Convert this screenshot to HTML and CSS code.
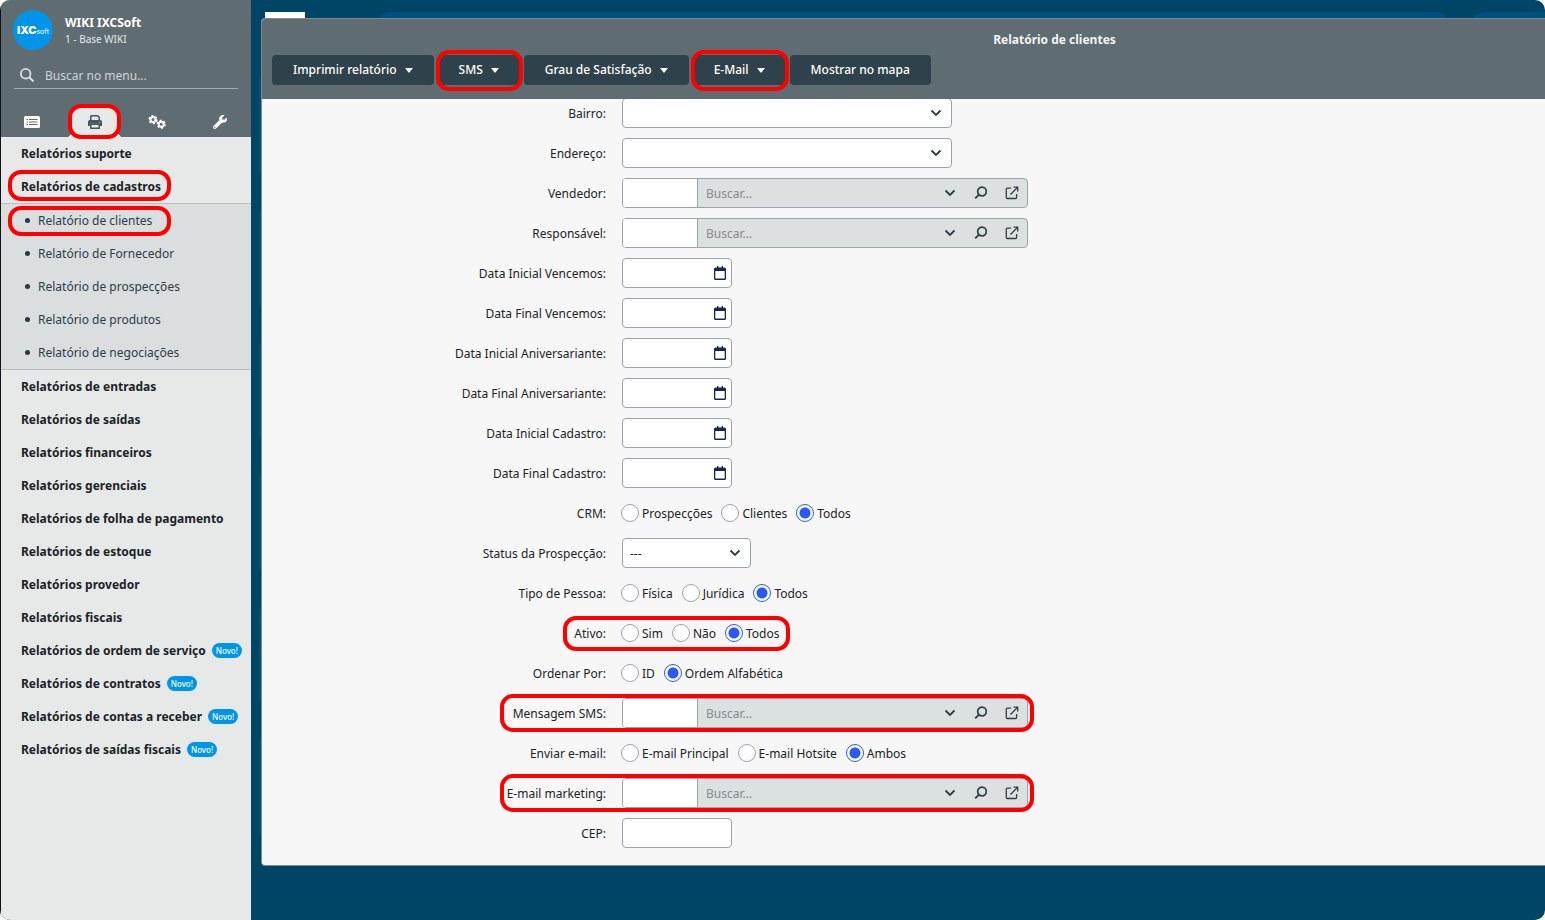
FILE: index.html
```
<!DOCTYPE html>
<html lang="pt-BR">
<head>
<meta charset="utf-8">
<title>Relatório de clientes</title>
<link rel="stylesheet" href="styles.css">
</head>
<body>
<svg class="sprite" aria-hidden="true">
  <symbol id="i-chevron" viewBox="0 0 12 12"><path d="M1.500 3.500 6 8l4.500-4.500" fill="none" stroke="currentColor" stroke-width="1.800"/></symbol>
  <symbol id="i-lens" viewBox="0 0 14 14"><circle cx="8" cy="5.500" r="4.300" fill="none" stroke="currentColor" stroke-width="1.700"/><path d="M4.900 8.700 1.300 12.300" fill="none" stroke="currentColor" stroke-width="1.900"/></symbol>
  <symbol id="i-open" viewBox="0 0 14 14"><path d="M6 2.200H2.300a1 1 0 0 0-1 1v8.300a1 1 0 0 0 1 1h8.300a1 1 0 0 0 1-1V8M5.500 8.500 12.200 1.600M8.500 1.200h4.200v4.200" fill="none" stroke="currentColor" stroke-width="1.300"/></symbol>
  <symbol id="i-cal" viewBox="0 0 12 14"><path d="M3 0h1.400v1.500h3.200V0H9v1.500h1.500A1.500 1.500 0 0 1 12 3v9.500a1.500 1.500 0 0 1-1.500 1.500h-9A1.500 1.500 0 0 1 0 12.500V3a1.500 1.500 0 0 1 1.500-1.500H3zM1.300 5v7.500h9.400V5z" fill="currentColor" fill-rule="evenodd"/></symbol>
</svg>
<div class="app">
  <aside class="sidebar">
    <header class="side-head">
      <div class="brand">
        <div class="logo"><b>IXC</b><span>soft</span></div>
        <div class="who"><strong>WIKI IXCSoft</strong><span>1 - Base WIKI</span></div>
      </div>
      <label class="find">
        <svg viewBox="0 0 14 14" width="14" height="14"><circle cx="5.700" cy="5.700" r="4.800" fill="none" stroke="currentColor" stroke-width="1.800"/><path d="m9.300 9.300 4.200 4.200" stroke="currentColor" stroke-width="2"/></svg>
        <input type="search" placeholder="Buscar no menu..." aria-label="Buscar no menu">
      </label>
      <nav class="tabs">
        <button type="button" aria-label="Cadastros"><svg viewBox="0 0 16 12" width="16" height="12"><rect width="16" height="12" rx="1.500" fill="currentColor"/><path d="M2.500 3.500h1.500M5 3.500h8.500M2.500 6h1.500M5 6h8.500M2.500 8.500h1.500M5 8.500h8.500" stroke="#5f6c72" stroke-width="1.200"/></svg></button>
        <button type="button" class="active" aria-label="Relatórios"><span class="tab mark mark-tab"><svg viewBox="0 0 14 14" width="14" height="14"><path d="M2.800 5.500V1.600q0-.8.800-.8h6l1.600 1.600v3.100" fill="none" stroke="currentColor" stroke-width="1.500"/><path d="M1.800 5h10.400Q14 5 14 6.800V11h-2V8.800H2V11H0V6.800Q0 5 1.800 5z" fill="currentColor"/><path d="M2.800 9.200h8.400v4H2.800z" fill="none" stroke="currentColor" stroke-width="1.500"/><circle cx="11.800" cy="7" r=".6" fill="#e7e9e8"/></svg></span></button>
        <button type="button" aria-label="Configurações"><svg viewBox="0 0 18 14" width="18" height="14"><g fill="none" stroke="currentColor"><circle cx="5" cy="4.600" r="2.500" stroke-width="2"/><circle cx="5" cy="4.600" r="3.800" stroke-width="1.600" stroke-dasharray="2 1.980"/><circle cx="13.200" cy="9.200" r="2.500" stroke-width="2"/><circle cx="13.200" cy="9.200" r="3.800" stroke-width="1.600" stroke-dasharray="2 1.980"/></g></svg></button>
        <button type="button" aria-label="Ferramentas"><svg viewBox="0 0 512 512" width="14" height="14"><path fill="currentColor" d="M507.700 109.100c-2.200-9-13.500-12.100-20.100-5.500l-74.400 74.400-67.900-11.300L334 98.900l74.400-74.400c6.600-6.600 3.400-17.900-5.700-20.200-47.400-11.700-99.600.9-136.600 37.900-39.600 39.600-50.600 97.100-34.100 147.200L18.700 402.800c-25 25-25 65.500 0 90.500s65.500 25 90.500 0l213.200-213.200c50.100 16.700 107.500 5.700 147.400-34.200 37.100-37.100 49.700-89.300 37.900-136.800zM64 472a24 24 0 1 1 0-48 24 24 0 0 1 0 48z"/></svg></button>
      </nav>
    </header>
    <ul class="menu">
      <li><a href="#">Relatórios suporte</a></li>
      <li><a class="mark mark-item" href="#">Relatórios de cadastros</a>
        <ul class="submenu">
          <li><a class="mark mark-sub" href="#">Relatório de clientes</a></li>
          <li><a href="#">Relatório de Fornecedor</a></li>
          <li><a href="#">Relatório de prospecções</a></li>
          <li><a href="#">Relatório de produtos</a></li>
          <li><a href="#">Relatório de negociações</a></li>
        </ul>
      </li>
      <li><a href="#">Relatórios de entradas</a></li>
      <li><a href="#">Relatórios de saídas</a></li>
      <li><a href="#">Relatórios financeiros</a></li>
      <li><a href="#">Relatórios gerenciais</a></li>
      <li><a href="#">Relatórios de folha de pagamento</a></li>
      <li><a href="#">Relatórios de estoque</a></li>
      <li><a href="#">Relatórios provedor</a></li>
      <li><a href="#">Relatórios fiscais</a></li>
      <li><a href="#">Relatórios de ordem de serviço <span class="new">Novo!</span></a></li>
      <li><a href="#">Relatórios de contratos <span class="new">Novo!</span></a></li>
      <li><a href="#">Relatórios de contas a receber <span class="new">Novo!</span></a></li>
      <li><a href="#">Relatórios de saídas fiscais <span class="new">Novo!</span></a></li>
    </ul>
  </aside>
  <main class="desktop">
    <div class="backdrop"><i class="chip"></i><i class="panel"></i><i class="panel-end"></i></div>
    <div class="shortcuts"><i></i><i></i><i></i><i></i><i></i><i></i></div>
    <section class="window">
      <header class="win-head">
        <h1>Relatório de clientes</h1>
        <div class="toolbar">
          <button type="button">Imprimir relatório<i class="caret"></i></button>
          <button type="button" class="mark mark-btn">SMS<i class="caret"></i></button>
          <button type="button">Grau de Satisfação<i class="caret"></i></button>
          <button type="button" class="mark mark-btn">E-Mail<i class="caret"></i></button>
          <button type="button">Mostrar no mapa</button>
        </div>
      </header>
      <div class="scroll">
      <form class="form">
        <div class="row"><label for="bairro">Bairro:</label><div class="select wide"><select id="bairro"><option></option></select><svg><use href="#i-chevron"/></svg></div></div>
        <div class="row"><label for="endereco">Endereço:</label><div class="select wide"><select id="endereco"><option></option></select><svg><use href="#i-chevron"/></svg></div></div>
        <div class="row"><label for="vendedor">Vendedor:</label><div class="lookup"><input class="code" id="vendedor" type="text"><input class="query" type="text" placeholder="Buscar..." aria-label="Buscar vendedor"><button type="button" aria-label="Listar"><svg class="s12"><use href="#i-chevron"/></svg></button><button type="button" aria-label="Pesquisar"><svg><use href="#i-lens"/></svg></button><button type="button" aria-label="Abrir"><svg><use href="#i-open"/></svg></button></div></div>
        <div class="row"><label for="responsavel">Responsável:</label><div class="lookup"><input class="code" id="responsavel" type="text"><input class="query" type="text" placeholder="Buscar..." aria-label="Buscar responsável"><button type="button" aria-label="Listar"><svg class="s12"><use href="#i-chevron"/></svg></button><button type="button" aria-label="Pesquisar"><svg><use href="#i-lens"/></svg></button><button type="button" aria-label="Abrir"><svg><use href="#i-open"/></svg></button></div></div>
        <div class="row"><label for="div">Data Inicial Vencemos:</label><div class="date"><input id="div" type="text"><svg><use href="#i-cal"/></svg></div></div>
        <div class="row"><label for="dfv">Data Final Vencemos:</label><div class="date"><input id="dfv" type="text"><svg><use href="#i-cal"/></svg></div></div>
        <div class="row"><label for="dia">Data Inicial Aniversariante:</label><div class="date"><input id="dia" type="text"><svg><use href="#i-cal"/></svg></div></div>
        <div class="row"><label for="dfa">Data Final Aniversariante:</label><div class="date"><input id="dfa" type="text"><svg><use href="#i-cal"/></svg></div></div>
        <div class="row"><label for="dic">Data Inicial Cadastro:</label><div class="date"><input id="dic" type="text"><svg><use href="#i-cal"/></svg></div></div>
        <div class="row"><label for="dfc">Data Final Cadastro:</label><div class="date"><input id="dfc" type="text"><svg><use href="#i-cal"/></svg></div></div>
        <div class="row" role="radiogroup" aria-labelledby="l-crm"><span class="label" id="l-crm">CRM:</span><div class="radios"><label><input type="radio" name="crm"><span>Prospecções</span></label><label><input type="radio" name="crm"><span>Clientes</span></label><label><input type="radio" name="crm" checked><span>Todos</span></label></div></div>
        <div class="row"><label for="status">Status da Prospecção:</label><div class="select short"><select id="status"><option>---</option></select><svg><use href="#i-chevron"/></svg></div></div>
        <div class="row" role="radiogroup" aria-labelledby="l-tipo"><span class="label" id="l-tipo">Tipo de Pessoa:</span><div class="radios"><label><input type="radio" name="tipo"><span>Física</span></label><label><input type="radio" name="tipo"><span>Jurídica</span></label><label><input type="radio" name="tipo" checked><span>Todos</span></label></div></div>
        <div class="row mark mark-ativo" role="radiogroup" aria-labelledby="l-ativo"><span class="label" id="l-ativo">Ativo:</span><div class="radios"><label><input type="radio" name="ativo"><span>Sim</span></label><label><input type="radio" name="ativo"><span>Não</span></label><label><input type="radio" name="ativo" checked><span>Todos</span></label></div></div>
        <div class="row" role="radiogroup" aria-labelledby="l-ordem"><span class="label" id="l-ordem">Ordenar Por:</span><div class="radios"><label><input type="radio" name="ordem"><span>ID</span></label><label><input type="radio" name="ordem" checked><span>Ordem Alfabética</span></label></div></div>
        <div class="row mark mark-row"><label for="sms">Mensagem SMS:</label><div class="lookup"><input class="code" id="sms" type="text"><input class="query" type="text" placeholder="Buscar..." aria-label="Buscar mensagem SMS"><button type="button" aria-label="Listar"><svg class="s12"><use href="#i-chevron"/></svg></button><button type="button" aria-label="Pesquisar"><svg><use href="#i-lens"/></svg></button><button type="button" aria-label="Abrir"><svg><use href="#i-open"/></svg></button></div></div>
        <div class="row" role="radiogroup" aria-labelledby="l-envio"><span class="label" id="l-envio">Enviar e-mail:</span><div class="radios"><label><input type="radio" name="envio"><span>E-mail Principal</span></label><label><input type="radio" name="envio"><span>E-mail Hotsite</span></label><label><input type="radio" name="envio" checked><span>Ambos</span></label></div></div>
        <div class="row mark mark-row"><label for="mkt">E-mail marketing:</label><div class="lookup"><input class="code" id="mkt" type="text"><input class="query" type="text" placeholder="Buscar..." aria-label="Buscar e-mail marketing"><button type="button" aria-label="Listar"><svg class="s12"><use href="#i-chevron"/></svg></button><button type="button" aria-label="Pesquisar"><svg><use href="#i-lens"/></svg></button><button type="button" aria-label="Abrir"><svg><use href="#i-open"/></svg></button></div></div>
        <div class="row"><label for="cep">CEP:</label><div class="date"><input id="cep" type="text"></div></div>
      </form>
      </div>
    </section>
  </main>
</div>
</body>
</html>
```
FILE: styles.css
```
*, *::before, *::after { box-sizing: border-box; }
body { margin: 0; background: #fff; font: 12px/18px "Noto Sans", sans-serif; color: #1b2326; }
button, input, select { font: inherit; color: inherit; margin: 0; }
button { border: 0; background: none; padding: 0; }
a { color: inherit; text-decoration: none; }
ul { list-style: none; margin: 0; padding: 0; }
.sprite { display: none; }

.app { display: flex; min-height: 100vh; border-radius: 10px; overflow: hidden; background: #004466; }

/* sidebar */
.sidebar { flex: 0 0 251px; border-left: 1px solid #10101e; background: #e7e9e8; }
.side-head { height: 137px; background: #5f6c72; color: #fff; display: flex; flex-direction: column; }
.brand { display: flex; gap: 12px; padding: 10px 12px 0; }
.logo { width: 40px; height: 40px; border-radius: 50%; background: #0095e8; display: flex; align-items: baseline; justify-content: center; font: 7px/40px Inter, sans-serif; }
.logo b { font-size: 11px; font-weight: 900; }
.who { display: flex; flex-direction: column; padding-top: 4px; }
.who span { font-size: 10px; line-height: 14px; color: #e4e8ea; }
.find { display: flex; align-items: center; gap: 11px; height: 27px; margin: 12px 13px 0; padding: 0 6px; border-bottom: 1px solid #a3adb1; color: #d9dee0; }
.find input { flex: 1; min-width: 0; padding: 2px 0 0; border: 0; outline: 0; background: none; }
.find input::placeholder { color: #cdd3d6; opacity: 1; }
.tabs { display: grid; grid-template-columns: repeat(4, 1fr); margin-top: auto; height: 31px; }
.tabs button { display: flex; align-items: center; justify-content: center; color: #fff; }
.tab { display: flex; align-items: center; justify-content: center; width: 47px; height: 31px; background: #e7e9e8; color: #45565e; border-radius: 10px 10px 0 0; }
.tab::before { content: ""; position: absolute; inset: auto -3px 0; height: 3px; background: #e7e9e8; clip-path: polygon(3px 0, calc(100% - 3px) 0, 100% 100%, 0 100%); z-index: 0; }

.menu a { display: flex; align-items: center; height: 33px; padding-left: 20px; font-weight: 700; white-space: nowrap; }
.submenu { background: #dadedf; border: solid #b9bdbf; border-width: 1px 0; }
.submenu a { padding-left: 24px; font-weight: 400; color: #2c3d45; }
.submenu a::before { content: ""; width: 5px; height: 5px; margin-right: 8px; border-radius: 50%; background: #263940; }
.new { margin-left: 6px; padding: 0 4px; border-radius: 8px; background: #0095e8; color: #fff; font-size: 8px; line-height: 15px; font-weight: 500; }

/* red highlight frames */
.mark { position: relative; }
.mark::after { content: ""; position: absolute; z-index: 3; border: 4px solid #f00; border-radius: 13px; pointer-events: none; }
.mark-tab::after { inset: -2px -3px; }
.mark-item::after { inset: 0 80px 2px 7px; }
.mark-sub::after { inset: 2px 80px 1px 7px; }
.mark-btn::after { inset: -5px -3px -6px -2px; }
.mark-ativo::after { left: 301px; width: 227px; top: 3px; bottom: 2px; }
.mark-row::after { left: 238px; width: 534px; top: 1px; bottom: 1px; }

/* desktop */
.desktop { position: relative; flex: 1; min-width: 0; padding: 18px 0 54px 10px; }
.backdrop { position: absolute; inset: 12px 0 auto 14px; display: flex; height: 20px; }
.chip { width: 40px; background: #fff; }
.panel { flex: 1; margin: 0 20px 0 73px; border-radius: 20px; background: #00507f; }
.panel-end { width: 78px; border-radius: 20px 0 0 0; background: #00507f; }
.shortcuts { position: absolute; top: 72px; left: 8px; display: flex; flex-direction: column; gap: 22px; }
.shortcuts i { width: 40px; height: 110px; border-radius: 12px; background: #00507f; }
.window { position: relative; border: 1px solid #7d8a8f; border-right: 0; border-radius: 4px 0 0 4px; background: #f7f7f7; }
.win-head { position: relative; z-index: 2; height: 80px; background: #5f6c72; color: #fff; padding: 12px 10px 0; border-radius: 3px 0 0 0; }
h1 { margin: 0 0 6px; padding-left: 302px; font-size: 12px; line-height: 18px; font-weight: 700; text-align: center; color: #f1f3f3; }
.toolbar { display: flex; gap: 4px; }
.toolbar button { display: flex; align-items: center; gap: 8px; height: 30px; padding: 0 21px; border-radius: 4px; background: #2f414a; color: #fff; font-weight: 500; }
.caret { width: 0; border: 4px solid transparent; border-top: 5px solid #fff; border-bottom: 0; }

.scroll { overflow: hidden; padding-bottom: 12px; }
.form { margin-top: -6px; }
.row { display: grid; grid-template-columns: 344px 1fr; column-gap: 16px; align-items: center; height: 40px; }
.row > label, .label { padding-top: 2px; text-align: right; }
.form input[type="text"], .form select { height: 30px; padding: 0 8px; border: 1px solid #9aa5a9; border-radius: 4px; background: #fff; outline: 0; }
.select, .date { display: grid; align-items: center; }
.select > *, .date > * { grid-area: 1 / 1; width: 100%; }
.form .select select { appearance: none; padding: 2px 7px 0; }
.select svg, .date svg { justify-self: end; pointer-events: none; color: #2c3d45; }
.select svg { width: 12px; height: 12px; margin-right: 10px; }
.wide { width: 330px; }
.short { width: 129px; }
.date { width: 110px; }
.date svg { width: 12px; height: 14px; margin-right: 6px; color: #1b2550; }
.lookup { display: flex; width: 406px; height: 30px; border: 1px solid #9aa5a9; border-radius: 4px; background: #dce0e1; overflow: hidden; }
.form .lookup input { height: 28px; border: 0; border-radius: 0; min-width: 0; }
.form .lookup .code { width: 75px; border-right: 1px solid #9aa5a9; }
.form .lookup .query { flex: 1; background: none; }
.query::placeholder { color: #848b8e; opacity: 1; }
.lookup button { width: 31px; display: flex; align-items: center; justify-content: center; color: #2c3d45; }
.lookup svg { width: 14px; height: 14px; }
.lookup .s12 { width: 12px; height: 12px; }
.radios { display: flex; gap: 9px; margin-left: -1px; }
.radios label { display: flex; align-items: center; gap: 3px; }
.radios span { padding-top: 2px; }
.radios input { appearance: none; width: 18px; height: 18px; border: 1px solid #9aa5a9; border-radius: 50%; background: #fff; }
.radios input:checked { border-color: #2b59f5; background: radial-gradient(circle, #2b59f5 5px, #fff 6px); }
```
